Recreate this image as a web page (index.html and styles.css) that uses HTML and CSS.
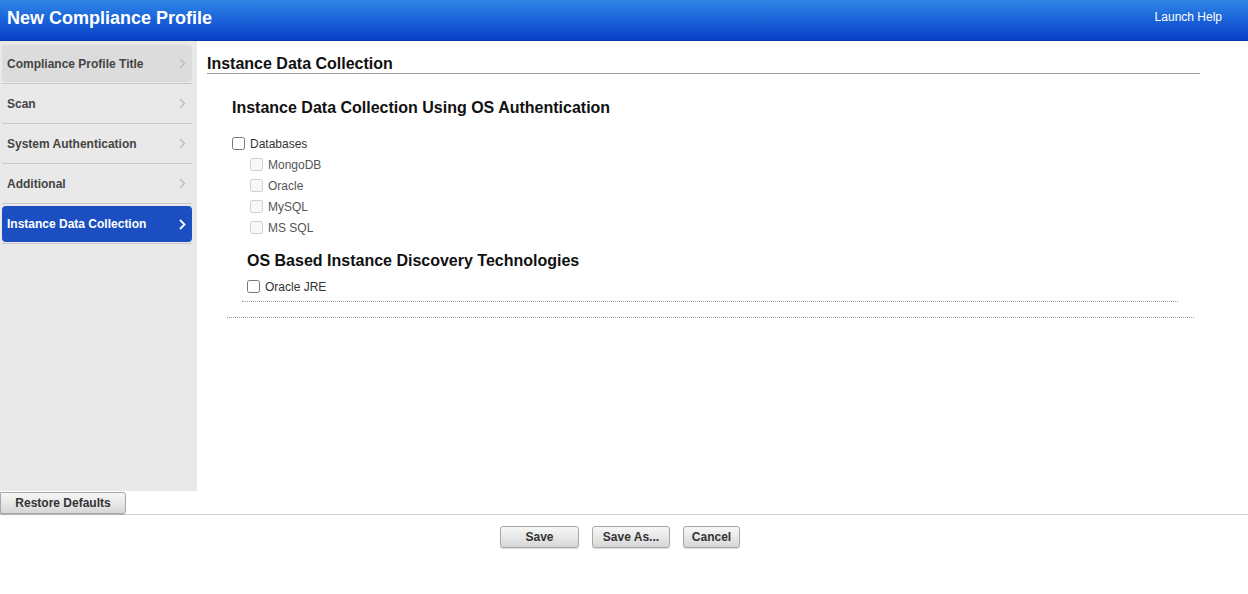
FILE: index.html
```html
<!DOCTYPE html>
<html>
<head>
<meta charset="utf-8">
<title>New Compliance Profile</title>
<link rel="stylesheet" href="styles.css">
</head>
<body>
<header class="topbar">
  <h1 class="title">New Compliance Profile</h1>
  <a class="help" href="#">Launch Help</a>
</header>
<div class="layout">
  <nav class="sidebar">
    <div class="nav-item first"><div class="nav-link"><span>Compliance Profile Title</span><svg class="chev" width="7" height="11" viewBox="0 0 7 11"><polyline points="1,1 5.5,5.5 1,10" fill="none" stroke="currentColor" stroke-width="1.4"/></svg></div></div>
    <div class="nav-item"><div class="nav-link"><span>Scan</span><svg class="chev" width="7" height="11" viewBox="0 0 7 11"><polyline points="1,1 5.5,5.5 1,10" fill="none" stroke="currentColor" stroke-width="1.4"/></svg></div></div>
    <div class="nav-item"><div class="nav-link"><span>System Authentication</span><svg class="chev" width="7" height="11" viewBox="0 0 7 11"><polyline points="1,1 5.5,5.5 1,10" fill="none" stroke="currentColor" stroke-width="1.4"/></svg></div></div>
    <div class="nav-item"><div class="nav-link"><span>Additional</span><svg class="chev" width="7" height="11" viewBox="0 0 7 11"><polyline points="1,1 5.5,5.5 1,10" fill="none" stroke="currentColor" stroke-width="1.4"/></svg></div></div>
    <div class="nav-item active"><div class="nav-link"><span>Instance Data Collection</span><svg class="chev" width="7" height="11" viewBox="0 0 7 11"><polyline points="1,1 5.5,5.5 1,10" fill="none" stroke="currentColor" stroke-width="1.8"/></svg></div></div>
  </nav>
  <main class="content">
    <h2 class="section-title">Instance Data Collection</h2>
    <div class="outer-group">
      <h3 class="sub-title">Instance Data Collection Using OS Authentication</h3>
      <label class="check-row"><input type="checkbox"><span>Databases</span></label>
      <div class="indent">
        <label class="check-row disabled"><input type="checkbox" disabled><span>MongoDB</span></label>
        <label class="check-row disabled"><input type="checkbox" disabled><span>Oracle</span></label>
        <label class="check-row disabled"><input type="checkbox" disabled><span>MySQL</span></label>
        <label class="check-row disabled"><input type="checkbox" disabled><span>MS SQL</span></label>
      </div>
      <div class="inner-group">
        <h3 class="sub-title second">OS Based Instance Discovery Technologies</h3>
        <label class="check-row"><input type="checkbox"><span>Oracle JRE</span></label>
      </div>
    </div>
  </main>
</div>
<div class="restore-row">
  <button class="btn restore">Restore Defaults</button>
</div>
<footer class="actions">
  <button class="btn save">Save</button>
  <button class="btn saveas">Save As...</button>
  <button class="btn cancel">Cancel</button>
</footer>
</body>
</html>
```

FILE: styles.css
```css
* { box-sizing: border-box; }
html, body { margin: 0; padding: 0; background: #fff; }
body {
  font-family: "Liberation Sans", Arial, sans-serif;
  color: #222;
  width: 1248px;
  height: 594px;
  overflow: hidden;
}
.topbar {
  height: 41px;
  background: linear-gradient(to bottom, #2f87e6 0%, #1a62d8 50%, #0a40c6 100%);
  border-bottom: 1px solid #0a36a8;
  display: flex;
  align-items: center;
  justify-content: space-between;
  padding: 0 26px 0 7px;
}
.title {
  margin: 0;
  font-size: 18px;
  font-weight: bold;
  color: #fff;
  padding-bottom: 4px;
}
.help {
  color: #fff;
  font-size: 12px;
  text-decoration: none;
  padding-bottom: 6px;
}
.layout {
  display: flex;
  height: 450px;
}
.sidebar {
  width: 197px;
  flex: none;
  background: #e9e9e9;
  padding: 3px 5px 0 2px;
}
.nav-item {
  height: 40px;
  border-bottom: 1px solid #c8c8c8;
  padding: 1px 0 1px;
}
.nav-link {
  height: 100%;
  display: flex;
  align-items: center;
  justify-content: space-between;
  padding: 0 6px 0 5px;
  border-radius: 4px;
  font-size: 12px;
  font-weight: bold;
  color: #444;
}
.nav-item.first { padding-top: 1px; }
.nav-item.first .nav-link { background: #dcdcdc; }
.nav-item.active { padding: 2px 0 1px; }
.nav-item.active .nav-link {
  background: #1b4fc1;
  color: #fff;
}
.chev { color: #bdbdbd; }
.active .chev { color: #fff; }
.content {
  flex: 1;
  padding: 13px 48px 0 10px;
}
.section-title {
  margin: 0;
  font-size: 16px;
  font-weight: bold;
  line-height: 19px;
  color: #111;
  border-bottom: 1px solid #a0a0a0;
}
.outer-group {
  margin: 24px 6px 0 20px;
  padding: 0 0 15px 5px;
  border-bottom: 1px dotted #999;
}
.sub-title {
  margin: 0 0 15px;
  font-size: 16px;
  line-height: 20px;
  font-weight: bold;
  color: #111;
}
.check-row {
  display: flex;
  align-items: center;
  height: 21px;
  font-size: 12px;
  color: #333;
}
.check-row input {
  margin: 0 5px 0 0;
  width: 13px;
  height: 13px;
}
.check-row.disabled { color: #555; }
.indent { padding-left: 18px; }
.inner-group {
  margin: 13px 16px 0 10px;
  padding: 0 0 4px 5px;
  border-bottom: 1px dotted #999;
}
.sub-title.second { margin-bottom: 5px; }
.restore-row {
  height: 24px;
  padding-top: 1px;
  border-bottom: 1px solid #cfcfcf;
}
.btn {
  font-family: "Liberation Sans", Arial, sans-serif;
  font-size: 12px;
  font-weight: bold;
  color: #333;
  height: 22px;
  padding: 0;
  background: linear-gradient(to bottom, #f7f7f7 0%, #e8e8e8 50%, #d6d6d6 100%);
  border: 1px solid #a8a8a8;
  border-radius: 3px;
  box-shadow: 0 1px 1px rgba(0,0,0,0.15);
}
.restore { width: 126px; border-radius: 0 3px 3px 0; }
.actions {
  display: flex;
  justify-content: center;
  gap: 13px;
  padding: 11px 8px 0 0;
}
.save { width: 79px; }
.saveas { width: 78px; }
.cancel { width: 57px; }
```
